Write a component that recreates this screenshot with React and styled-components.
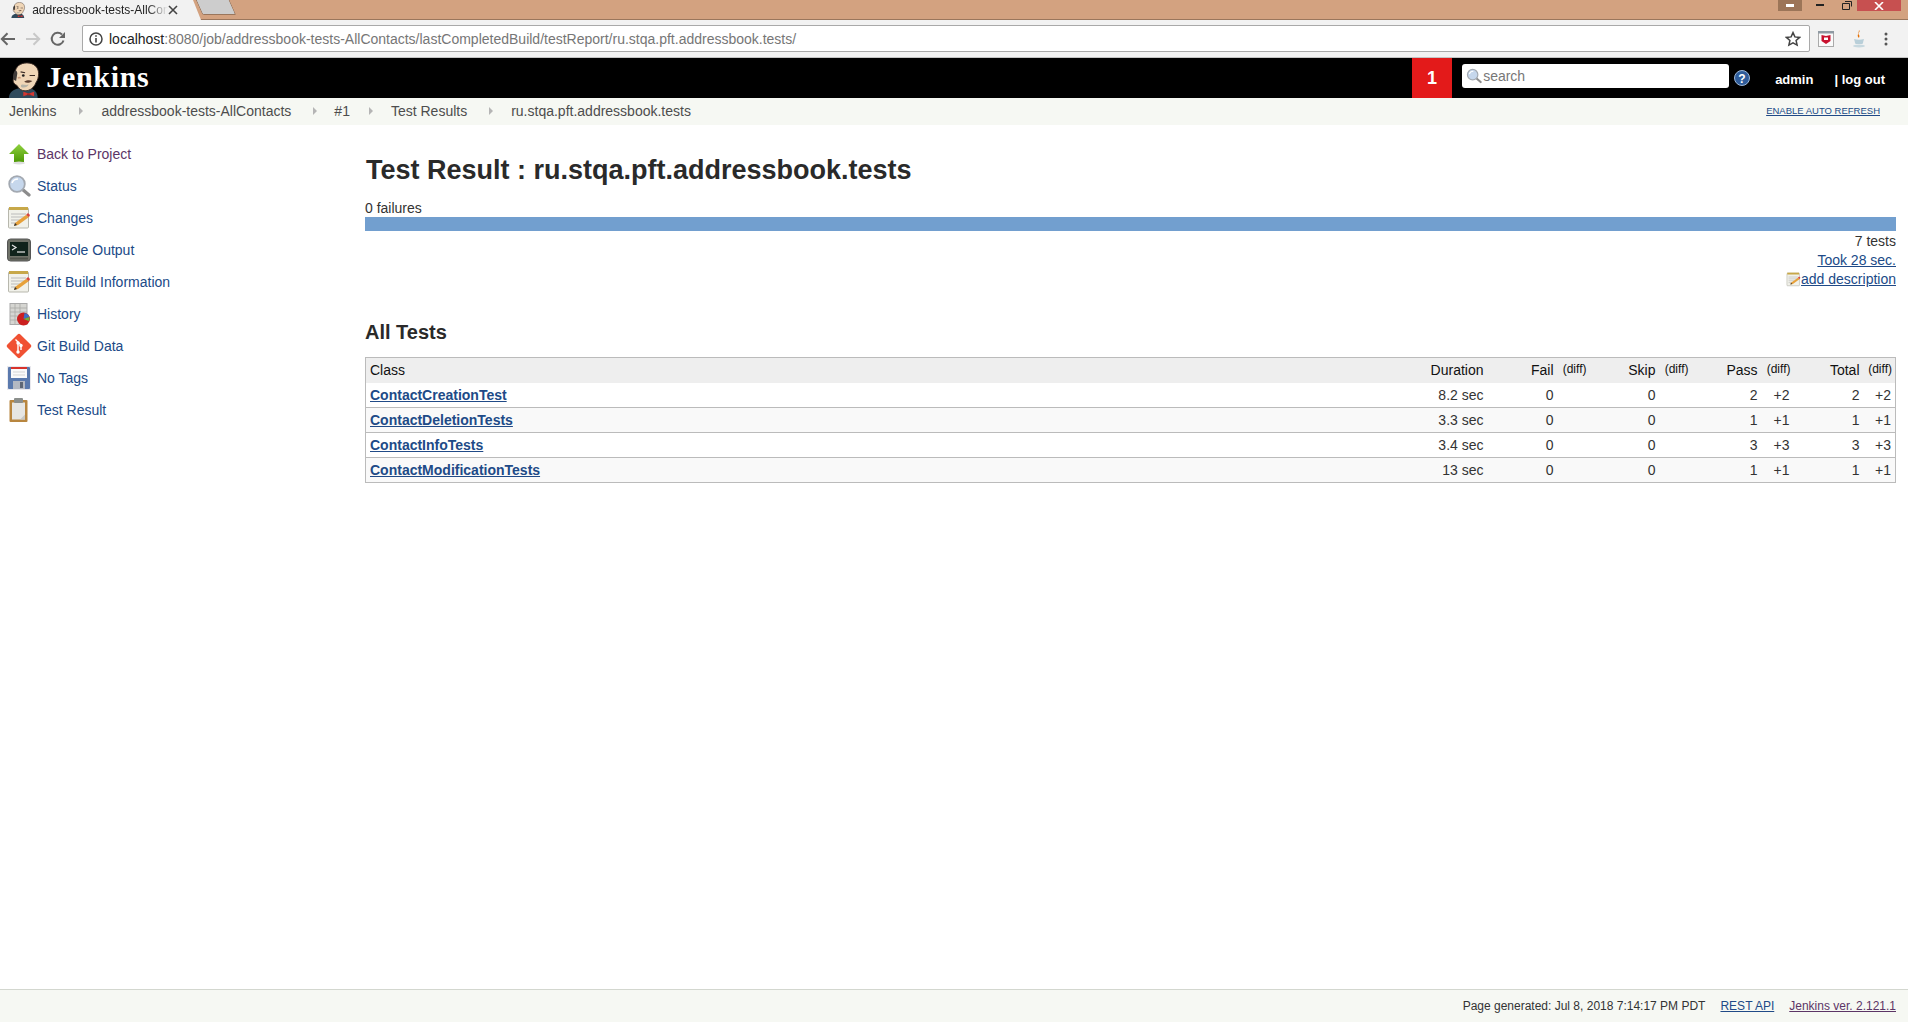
import React from 'react';
import styled, { createGlobalStyle } from 'styled-components';

const GlobalStyle = createGlobalStyle`
  html, body { margin: 0; padding: 0; height: 100%; background: #fff; }
  body { font-family: "Liberation Sans", Arial, sans-serif; font-size: 14px; color: #333; overflow: hidden; }
  a { color: #204a87; text-decoration: none; }
`;

const Page = styled.div`
  display: flex;
  flex-direction: column;
  height: 1022px;
`;

// browser chrome
const TabStrip = styled.div`
  display: flex;
  align-items: flex-start;
  height: 20px;
  background: #d3a280;
  border-bottom: 1px solid #9a765c;
  box-sizing: border-box;
`;
const Tab = styled.div`
  display: flex;
  align-items: center;
  width: 201px;
  height: 20px;
  flex: none;
  box-sizing: border-box;
  padding: 0 0 0 11px;
  background: #f2f2f2;
  clip-path: polygon(0 0, 193px 0, 201px 20px, 0 20px);
  font-size: 12px;
  color: #222;
`;
const TabTitle = styled.span`
  width: 136px;
  margin-left: 6px;
  overflow: hidden;
  white-space: nowrap;
  -webkit-mask-image: linear-gradient(to right, #000 85%, transparent);
`;
const NewTab = styled.div`
  width: 32px;
  height: 14px;
  flex: none;
  margin-left: -2px;
  background: #cdcdcd;
  border: 1px solid #9a765c;
  border-top: 0;
  border-radius: 0 0 2px 2px;
  transform: skewX(24deg);
`;
const WindowControls = styled.div`
  margin-left: auto;
  display: flex;
  align-items: flex-start;
  padding-right: 7px;
`;
const WinButton = styled.div`
  display: flex;
  align-items: center;
  justify-content: center;
  width: ${p => p.$w}px;
  height: 11px;
  background: ${p => p.$bg || 'transparent'};
`;
const Toolbar = styled.div`
  display: flex;
  align-items: center;
  height: 38px;
  box-sizing: border-box;
  background: #f2f2f2;
  border-bottom: 1px solid #c4c4c4;
`;
const NavButtons = styled.div`
  display: flex;
  align-items: center;
  gap: 9px;
  width: 82px;
  box-sizing: border-box;
  padding-left: 0;
  flex: none;
`;
const Omnibox = styled.div`
  display: flex;
  align-items: center;
  flex: none;
  width: 1728px;
  height: 27px;
  box-sizing: border-box;
  background: #fff;
  border: 1px solid #a9a9a9;
  border-radius: 2px;
  padding: 0 8px 0 6px;
  font-size: 14px;
  color: #767676;
`;
const UrlHost = styled.span`
  color: #222;
  margin-left: 6px;
`;
const UrlRest = styled.span`
  flex: 1;
`;
const Extensions = styled.div`
  display: flex;
  align-items: center;
  padding-left: 8px;
  gap: 18px;
`;

// jenkins header
const Header = styled.header`
  display: flex;
  align-items: stretch;
  height: 40px;
  background: #000;
  color: #fff;
`;
const Logo = styled.div`
  display: flex;
  align-items: flex-end;
  padding-left: 8px;
`;
const LogoText = styled.span`
  font-family: "Liberation Serif", "Times New Roman", serif;
  font-weight: bold;
  font-size: 30px;
  letter-spacing: 0.7px;
  line-height: 38px;
  margin: 0 0 2px 4px;
`;
const Spacer = styled.div`
  flex: 1;
`;
const AlertBox = styled.div`
  display: flex;
  align-items: center;
  justify-content: center;
  width: 40px;
  background: #e31a1a;
  font-size: 18px;
  font-weight: bold;
`;
const SearchBox = styled.div`
  display: flex;
  align-items: center;
  width: 267px;
  height: 24px;
  box-sizing: border-box;
  margin: 6px 0 0 10px;
  padding-left: 4px;
  background: #fff;
  border-radius: 3px;
  color: #777;
  font-size: 14px;
  gap: 1px;
`;
const HelpIcon = styled.div`
  display: flex;
  align-items: center;
  margin-left: 5px;
`;
const UserLink = styled.span`
  align-self: center;
  margin: 0 0 0 ${p => p.$ml}px;
  padding-top: 2px;
  font-size: 13px;
  font-weight: bold;
  color: #fff;
  white-space: nowrap;
`;

// breadcrumb
const Breadcrumbs = styled.nav`
  display: flex;
  align-items: center;
  height: 27px;
  flex: none;
  box-sizing: border-box;
  padding: 0 28px 1px 9px;
  background: #f6f8f3;
  color: #4d4d4d;
  font-size: 14px;
`;
const Crumb = styled.span`
  white-space: nowrap;
`;
const CrumbArrow = styled.span`
  width: 0;
  height: 0;
  margin: 0 ${p => p.$r}px 0 ${p => p.$l}px;
  border-left: 4px solid #b5b5b5;
  border-top: 4px solid transparent;
  border-bottom: 4px solid transparent;
`;
const AutoRefresh = styled.a`
  margin-left: auto;
  padding-bottom: 1px;
  font-size: 9.5px;
  text-decoration: underline;
`;

// body
const Content = styled.div`
  display: flex;
  flex: 1;
  min-height: 0;
`;
const Sidebar = styled.aside`
  display: flex;
  flex-direction: column;
  flex: none;
  width: 365px;
  box-sizing: border-box;
  padding: 13px 0 0 6px;
`;
const SideItem = styled.div`
  display: flex;
  align-items: center;
  height: 32px;
  font-size: 14px;
`;
const SideIcon = styled.span`
  display: flex;
  align-items: center;
  justify-content: center;
  width: 26px;
  height: 26px;
  margin-right: 5px;
  flex: none;
`;
const SideLink = styled.a`
  color: ${p => (p.$visited ? '#5c3566' : '#204a87')};
`;
const Main = styled.main`
  flex: none;
  width: 1531px;
  display: flex;
  flex-direction: column;
`;
const Title = styled.h1`
  margin: 28px 0 0;
  font-size: 27px;
  line-height: 34px;
  font-weight: bold;
  color: #2a2a2a;
  padding-left: 1px;
`;
const FailCount = styled.div`
  margin-top: 12px;
  line-height: 18px;
`;
const ProgressBar = styled.div`
  height: 14px;
  margin-top: 0;
  background: #729fcf;
`;
const SummaryRight = styled.div`
  display: flex;
  flex-direction: column;
  align-items: flex-end;
  margin-top: 1px;
  line-height: 19px;
`;
const SummaryLink = styled.a`
  display: inline-flex;
  align-items: center;
  text-decoration: underline;
`;
const SectionTitle = styled.h2`
  margin: 30px 0 0;
  font-size: 20px;
  line-height: 26px;
  font-weight: bold;
  color: #2a2a2a;
`;
const Table = styled.table`
  width: 100%;
  margin-top: 12px;
  border-collapse: collapse;
  table-layout: fixed;
  border: 1px solid #bbb;
  font-size: 14px;
`;
const Th = styled.th`
  height: 25px;
  padding: 0 4px;
  box-sizing: border-box;
  font-weight: normal;
  color: #111;
  background: #eee;
  text-align: ${p => (p.$left ? 'left' : 'right')};
`;
const DiffTh = styled(Th)`
  font-size: 12px;
  padding: 0 3px 2px 0;
`;
const Tr = styled.tr`
  background: ${p => (p.$odd ? '#f9f9f9' : '#fff')};
  border-top: 1px solid #bbb;
  &:first-child { border-top: 0; }
`;
const Td = styled.td`
  height: 25px;
  padding: 0 4px;
  box-sizing: border-box;
  text-align: ${p => (p.$left ? 'left' : 'right')};
`;
const DiffTd = styled(Td)`
  padding: 0 4px 0 0;
`;
const ClassLink = styled.a`
  font-weight: bold;
  text-decoration: underline;
`;
const Footer = styled.footer`
  display: flex;
  justify-content: flex-end;
  align-items: center;
  flex: none;
  height: 33px;
  box-sizing: border-box;
  padding: 0 12px 0 0;
  gap: 15px;
  border-top: 1px solid #d3d7cf;
  background: #f6f8f3;
  font-size: 12px;
`;
const FooterLink = styled.a`
  text-decoration: underline;
  color: ${p => (p.$visited ? '#5c3566' : '#204a87')};
`;

const JenkinsHead = ({ size = 40 }) => (
  <svg width={size * 0.95} height={size} viewBox="0 0 38 40">
    <path d="M1 40c0-5 3-8 8-10l8-2 10 2c4 2 6 5 6 10z" fill="#2f4a5c" />
    <path d="M17 33l6 2 6-2v5l-6-2-6 2z" fill="#d33833" />
    <path d="M21 35h4v2h-4z" fill="#a52522" />
    <path d="M8 12C8 5 14 1 21 1s13 4 13 12c0 4-1 7-3 10-2 5-6 9-12 9-4 0-7-2-9-6-3-1-5-4-4-7 0-3 1-5 2-7z" fill="#f0d6b7" stroke="#3b2b25" strokeWidth="1" />
    <path d="M8 9c-2 3-3 6-2 10 1 2 3 2 3 2l1-6c1-3 0-5-2-6z" fill="#3f3a38" />
    <path d="M15 28c3 1 7 0 8-3-3 1-5 0-7 0-2 0-2 2-1 3z" fill="#49728b" opacity=".35" />
    <path d="M18 22c3-2 6-2 9-1-2 2-6 3-9 1z" fill="#5a3d30" />
    <circle cx="17" cy="15" r="1.5" fill="#222" />
    <path d="M24 15h6M14 11l5 1" stroke="#3b2b25" strokeWidth="1.2" fill="none" />
    <path d="M11 18c1-1 2-1 3 0" stroke="#c99a7c" strokeWidth="1.5" fill="none" />
  </svg>
);

const ArrowUpIcon = () => (
  <svg width="22" height="22" viewBox="0 0 22 22">
    <defs>
      <linearGradient id="upg" x1="0" y1="0" x2="0" y2="1">
        <stop offset="0" stopColor="#8fd13f" />
        <stop offset="1" stopColor="#4e9a06" />
      </linearGradient>
    </defs>
    <path d="M11 1l10 10h-5v8H6v-8H1z" fill="url(#upg)" />
    <ellipse cx="11" cy="20" rx="6" ry="1.4" fill="#ddd" />
  </svg>
);
const MagnifierIcon = ({ size = 24 }) => (
  <svg width={size} height={size} viewBox="0 0 24 24">
    <path d="M15 15l7 6" stroke="#8c8c8c" strokeWidth="3.2" strokeLinecap="round" />
    <circle cx="10" cy="10" r="7.8" fill="#c6d7ec" stroke="#a3a9b1" strokeWidth="1.8" />
    <path d="M5 9c1-3 3-4 6-4" stroke="#fff" strokeWidth="1.6" fill="none" />
  </svg>
);
const NotepadIcon = ({ size = 24 }) => (
  <svg width={size} height={size} viewBox="0 0 24 24">
    <rect x="1.5" y="2" width="20" height="20" rx="1" fill="#f1f1ea" stroke="#b7b7ad" />
    <rect x="2" y="1" width="19" height="3" fill="#c7a849" />
    <path d="M4 8h15M4 11h15M4 14h9M4 17h6" stroke="#bbb" strokeWidth="1" />
    <path d="M7 20l1-3L19 9l3 2-11 8z" fill="#e7a13a" />
    <path d="M19 9l3 2 1-2-2-2z" fill="#d8433b" />
    <path d="M7 20l1-3 2 2z" fill="#333" />
  </svg>
);
const ConsoleIcon = () => (
  <svg width="24" height="24" viewBox="0 0 24 24">
    <rect x="0.5" y="1" width="23" height="22" rx="3" fill="#6f7268" stroke="#555" />
    <rect x="3" y="4" width="18" height="14" fill="#10231b" />
    <path d="M5 7l4 2.5L5 12" stroke="#e8e8e8" strokeWidth="1.2" fill="none" />
    <path d="M10 14h8" stroke="#e8e8e8" strokeWidth="1.2" />
    <rect x="3" y="19.5" width="18" height="2" fill="#50534b" />
  </svg>
);
const HistoryIcon = () => (
  <svg width="24" height="24" viewBox="0 0 24 24">
    <rect x="3" y="1.5" width="17" height="21" fill="#d6d6d2" stroke="#aaa" />
    <path d="M3 6h17M3 10h17M3 14h17M3 18h17M8 2v20M13 2v20" stroke="#a9a9a4" strokeWidth=".8" />
    <circle cx="16.5" cy="17" r="6.5" fill="#cc1f1f" />
    <path d="M16.5 17l6-2a6.5 6.5 0 0 0-5-4z" fill="#3b6fc4" />
    <path d="M16.5 17l6-2c.4 2-.2 3-.8 4z" fill="#6fb03c" />
  </svg>
);
const GitIcon = () => (
  <svg width="26" height="26" viewBox="0 0 26 26">
    <rect x="3.8" y="3.8" width="18.4" height="18.4" rx="2" fill="#f05133" transform="rotate(45 13 13)" />
    <path d="M9.5 6.5l5.5 5.5M12 10v9M15 12v5" stroke="#fff" strokeWidth="1.4" />
    <circle cx="12" cy="10" r="1.7" fill="#fff" />
    <circle cx="12" cy="19" r="1.7" fill="#fff" />
    <circle cx="15" cy="12.5" r="1.7" fill="#fff" />
  </svg>
);
const FloppyIcon = () => (
  <svg width="24" height="24" viewBox="0 0 24 24">
    <rect x="0" y="0" width="24" height="24" fill="#e9e9ee" />
    <rect x="1" y="1" width="22" height="22" rx="1" fill="#5a79ad" />
    <rect x="4" y="1" width="16" height="11" fill="#fafafa" />
    <rect x="4" y="1" width="16" height="2" fill="#d8332c" />
    <path d="M6 6h12M6 9h12" stroke="#d5d5d5" />
    <rect x="6" y="15" width="12" height="8" fill="#b3b8c2" />
    <rect x="13" y="16" width="3" height="6" fill="#5d6675" />
  </svg>
);
const ClipboardIcon = () => (
  <svg width="24" height="26" viewBox="0 0 24 26">
    <rect x="2.5" y="3" width="18" height="22" rx="1" fill="#b8863f" />
    <rect x="5" y="5.5" width="13" height="17" fill="#e6e6e3" />
    <path d="M13 22.5l5-5v5z" fill="#c8c8c5" />
    <rect x="7" y="1" width="9" height="5" rx="1" fill="#8b8f8c" />
  </svg>
);
const BackIcon = ({ color }) => (
  <svg width="16" height="14" viewBox="0 0 16 14">
    <path d="M15 7H2M7.5 1.2L1.8 7l5.7 5.8" stroke={color} strokeWidth="2" fill="none" />
  </svg>
);
const ForwardIcon = ({ color }) => (
  <svg width="16" height="14" viewBox="0 0 16 14">
    <path d="M1 7h13M8.5 1.2L14.2 7l-5.7 5.8" stroke={color} strokeWidth="2" fill="none" />
  </svg>
);
const ReloadIcon = () => (
  <svg width="16" height="16" viewBox="0 0 16 16">
    <path d="M13.5 9.5A6 6 0 1 1 12 3.5" stroke="#666" strokeWidth="2" fill="none" />
    <path d="M15 1v6H9z" fill="#666" />
  </svg>
);
const InfoIcon = () => (
  <svg width="14" height="14" viewBox="0 0 14 14">
    <circle cx="7" cy="7" r="6" stroke="#444" strokeWidth="1.5" fill="none" />
    <path d="M7 6v4.5M7 3.2v1.6" stroke="#444" strokeWidth="1.6" />
  </svg>
);
const StarIcon = () => (
  <svg width="16" height="16" viewBox="0 0 16 16">
    <path d="M8 1.6l1.9 4.3 4.7.5-3.5 3.1 1 4.6L8 11.8l-4.1 2.3 1-4.6L1.4 6.4l4.7-.5z" stroke="#444" strokeWidth="1.5" fill="none" />
  </svg>
);
const ShieldExt = () => (
  <svg width="16" height="16" viewBox="0 0 16 16">
    <rect x=".5" y=".5" width="15" height="15" fill="#fafafa" stroke="#aaa" />
    <rect x="0" y="0" width="16" height="2.5" fill="#8f9aa3" />
    <path d="M3.5 4l4.5 1 4.5-1v6L8 13 3.5 10z" fill="#c8102e" />
    <path d="M6 6.5h4V9H6z" fill="#fff" />
  </svg>
);
const JavaExt = () => (
  <svg width="14" height="18" viewBox="0 0 14 18">
    <path d="M7 0c2 2-2 3 0 5 1 1 0 2 0 3-2-2-1-3-1-4s1-2 1-4z" fill="#e76f00" />
    <path d="M2 9c3 1 7 1 10 0-1 3-1 5-2 5H4c-1 0-1-2-2-5z" fill="#b9cfd9" />
    <ellipse cx="7" cy="16" rx="6" ry="1.5" fill="#c7d8df" />
  </svg>
);
const DotsIcon = () => (
  <svg width="4" height="14" viewBox="0 0 4 14">
    <circle cx="2" cy="2" r="1.5" fill="#555" />
    <circle cx="2" cy="7" r="1.5" fill="#555" />
    <circle cx="2" cy="12" r="1.5" fill="#555" />
  </svg>
);
const HelpGlyph = () => (
  <svg width="16" height="16" viewBox="0 0 16 16">
    <circle cx="8" cy="8" r="7.5" fill="#2f5c9a" stroke="#9db8d9" />
    <text x="8" y="12.5" textAnchor="middle" fontSize="12" fontWeight="bold" fill="#fff" fontFamily="Liberation Sans">?</text>
  </svg>
);

const sideItems = [
  { label: 'Back to Project', icon: <ArrowUpIcon />, visited: true },
  { label: 'Status', icon: <MagnifierIcon /> },
  { label: 'Changes', icon: <NotepadIcon /> },
  { label: 'Console Output', icon: <ConsoleIcon /> },
  { label: 'Edit Build Information', icon: <NotepadIcon /> },
  { label: 'History', icon: <HistoryIcon /> },
  { label: 'Git Build Data', icon: <GitIcon /> },
  { label: 'No Tags', icon: <FloppyIcon /> },
  { label: 'Test Result', icon: <ClipboardIcon /> },
];

const rows = [
  ['ContactCreationTest', '8.2 sec', 2],
  ['ContactDeletionTests', '3.3 sec', 1],
  ['ContactInfoTests', '3.4 sec', 3],
  ['ContactModificationTests', '13 sec', 1],
];

const colWidths = [null, 90, 70, 32, 70, 32, 70, 32, 70, 32];

export default function App() {
  return (
    <Page>
      <GlobalStyle />
      <TabStrip>
        <Tab>
          <JenkinsHead size={16} />
          <TabTitle>addressbook-tests-AllContacts</TabTitle>
          <svg width="10" height="10" viewBox="0 0 10 10">
            <path d="M1 1l8 8M9 1l-8 8" stroke="#444" strokeWidth="1.6" />
          </svg>
        </Tab>
        <NewTab />
        <WindowControls>
          <WinButton $w={24} $bg="#9c7558">
            <svg width="8" height="3"><rect width="8" height="3" fill="#fff" /></svg>
          </WinButton>
          <WinButton $w={35}>
            <svg width="8" height="3"><rect width="8" height="2" fill="#222" /></svg>
          </WinButton>
          <WinButton $w={20}>
            <svg width="10" height="9"><path d="M.5 2.5h7v6h-7zM3 .5h6.5v5" stroke="#222" fill="none" /></svg>
          </WinButton>
          <WinButton $w={44} $bg="#c75050">
            <svg width="10" height="8"><path d="M1 0l8 8M9 0l-8 8" stroke="#fff" strokeWidth="1.6" /></svg>
          </WinButton>
        </WindowControls>
      </TabStrip>
      <Toolbar>
        <NavButtons>
          <BackIcon color="#666" />
          <ForwardIcon color="#c8c8c8" />
          <ReloadIcon />
        </NavButtons>
        <Omnibox>
          <InfoIcon />
          <UrlHost>localhost</UrlHost>
          <UrlRest>:8080/job/addressbook-tests-AllContacts/lastCompletedBuild/testReport/ru.stqa.pft.addressbook.tests/</UrlRest>
          <StarIcon />
        </Omnibox>
        <Extensions>
          <ShieldExt />
          <JavaExt />
          <DotsIcon />
        </Extensions>
      </Toolbar>
      <Header>
        <Logo>
          <JenkinsHead size={36} />
          <LogoText>Jenkins</LogoText>
        </Logo>
        <Spacer />
        <AlertBox>1</AlertBox>
        <SearchBox>
          <MagnifierIcon size={16} />
          search
        </SearchBox>
        <HelpIcon><HelpGlyph /></HelpIcon>
        <UserLink $ml={25}>admin</UserLink>
        <UserLink $ml={21}>| log out</UserLink>
        <UserLink $ml={23} />
      </Header>
      <Breadcrumbs>
        <Crumb>Jenkins</Crumb>
        <CrumbArrow $l={23} $r={18} />
        <Crumb>addressbook-tests-AllContacts</Crumb>
        <CrumbArrow $l={22} $r={17} />
        <Crumb>#1</Crumb>
        <CrumbArrow $l={19} $r={18} />
        <Crumb>Test Results</Crumb>
        <CrumbArrow $l={22} $r={18} />
        <Crumb>ru.stqa.pft.addressbook.tests</Crumb>
        <AutoRefresh>ENABLE AUTO REFRESH</AutoRefresh>
      </Breadcrumbs>
      <Content>
        <Sidebar>
          {sideItems.map(item => (
            <SideItem key={item.label}>
              <SideIcon>{item.icon}</SideIcon>
              <SideLink $visited={item.visited}>{item.label}</SideLink>
            </SideItem>
          ))}
        </Sidebar>
        <Main>
          <Title>Test Result : ru.stqa.pft.addressbook.tests</Title>
          <FailCount>0 failures</FailCount>
          <ProgressBar />
          <SummaryRight>
            <span>7 tests</span>
            <SummaryLink>Took 28 sec.</SummaryLink>
            <SummaryLink>
              <NotepadIcon size={15} />
              add description
            </SummaryLink>
          </SummaryRight>
          <SectionTitle>All Tests</SectionTitle>
          <Table>
            <colgroup>
              {colWidths.map((w, i) => (
                <col key={i} width={w || undefined} />
              ))}
            </colgroup>
            <thead>
              <tr>
                <Th $left>Class</Th>
                <Th>Duration</Th>
                <Th>Fail</Th>
                <DiffTh>(diff)</DiffTh>
                <Th>Skip</Th>
                <DiffTh>(diff)</DiffTh>
                <Th>Pass</Th>
                <DiffTh>(diff)</DiffTh>
                <Th>Total</Th>
                <DiffTh>(diff)</DiffTh>
              </tr>
            </thead>
            <tbody>
              {rows.map(([name, dur, n], i) => (
                <Tr key={name} $odd={i % 2 === 1}>
                  <Td $left><ClassLink>{name}</ClassLink></Td>
                  <Td>{dur}</Td>
                  <Td>0</Td>
                  <DiffTd />
                  <Td>0</Td>
                  <DiffTd />
                  <Td>{n}</Td>
                  <DiffTd>+{n}</DiffTd>
                  <Td>{n}</Td>
                  <DiffTd>+{n}</DiffTd>
                </Tr>
              ))}
            </tbody>
          </Table>
        </Main>
      </Content>
      <Footer>
        <span>Page generated: Jul 8, 2018 7:14:17 PM PDT</span>
        <FooterLink>REST API</FooterLink>
        <FooterLink $visited>Jenkins ver. 2.121.1</FooterLink>
      </Footer>
    </Page>
  );
}
